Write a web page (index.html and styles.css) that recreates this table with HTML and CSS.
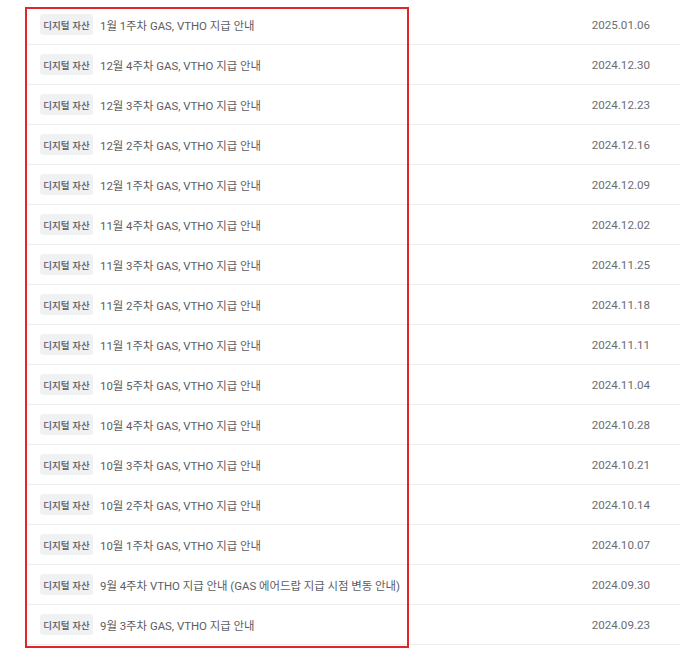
FILE: index.html
```html
<!DOCTYPE html>
<html lang="ko">
<head>
<meta charset="utf-8">
<link rel="stylesheet" href="styles.css">
</head>
<body>
<div class="page">
  <ul class="list">
    <li class="row"><span class="badge">디지털 자산</span><span class="title">1월 1주차 GAS, VTHO 지급 안내</span><span class="date">2025.01.06</span></li>
    <li class="row"><span class="badge">디지털 자산</span><span class="title">12월 4주차 GAS, VTHO 지급 안내</span><span class="date">2024.12.30</span></li>
    <li class="row"><span class="badge">디지털 자산</span><span class="title">12월 3주차 GAS, VTHO 지급 안내</span><span class="date">2024.12.23</span></li>
    <li class="row"><span class="badge">디지털 자산</span><span class="title">12월 2주차 GAS, VTHO 지급 안내</span><span class="date">2024.12.16</span></li>
    <li class="row"><span class="badge">디지털 자산</span><span class="title">12월 1주차 GAS, VTHO 지급 안내</span><span class="date">2024.12.09</span></li>
    <li class="row"><span class="badge">디지털 자산</span><span class="title">11월 4주차 GAS, VTHO 지급 안내</span><span class="date">2024.12.02</span></li>
    <li class="row"><span class="badge">디지털 자산</span><span class="title">11월 3주차 GAS, VTHO 지급 안내</span><span class="date">2024.11.25</span></li>
    <li class="row"><span class="badge">디지털 자산</span><span class="title">11월 2주차 GAS, VTHO 지급 안내</span><span class="date">2024.11.18</span></li>
    <li class="row"><span class="badge">디지털 자산</span><span class="title">11월 1주차 GAS, VTHO 지급 안내</span><span class="date">2024.11.11</span></li>
    <li class="row"><span class="badge">디지털 자산</span><span class="title">10월 5주차 GAS, VTHO 지급 안내</span><span class="date">2024.11.04</span></li>
    <li class="row"><span class="badge">디지털 자산</span><span class="title">10월 4주차 GAS, VTHO 지급 안내</span><span class="date">2024.10.28</span></li>
    <li class="row"><span class="badge">디지털 자산</span><span class="title">10월 3주차 GAS, VTHO 지급 안내</span><span class="date">2024.10.21</span></li>
    <li class="row"><span class="badge">디지털 자산</span><span class="title">10월 2주차 GAS, VTHO 지급 안내</span><span class="date">2024.10.14</span></li>
    <li class="row"><span class="badge">디지털 자산</span><span class="title">10월 1주차 GAS, VTHO 지급 안내</span><span class="date">2024.10.07</span></li>
    <li class="row"><span class="badge">디지털 자산</span><span class="title">9월 4주차 VTHO 지급 안내 (GAS 에어드랍 지급 시점 변동 안내)</span><span class="date">2024.09.30</span></li>
    <li class="row"><span class="badge">디지털 자산</span><span class="title">9월 3주차 GAS, VTHO 지급 안내</span><span class="date">2024.09.23</span></li>
  </ul>
  <div class="highlight"></div>
</div>
</body>
</html>
```

FILE: styles.css
```css
html, body {
  margin: 0;
  padding: 0;
  background: #ffffff;
}
body {
  font-family: "Roboto", "Noto Sans CJK KR", sans-serif;
}
.page {
  position: relative;
  width: 687px;
  height: 663px;
  padding-top: 5px;
  box-sizing: border-box;
}
.list {
  list-style: none;
  margin: 0 0 0 27px;
  padding: 0;
  width: 653px;
}
.row {
  display: flex;
  align-items: center;
  height: 40px;
  box-sizing: border-box;
  border-bottom: 1px solid #eeeeef;
  padding: 0 30px 0 13px;
}
.badge {
  display: inline-flex;
  align-items: center;
  justify-content: center;
  width: 53px;
  height: 21px;
  border-radius: 3px;
  background: #f0f1f3;
  color: #54575d;
  font-family: "Noto Sans CJK KR", sans-serif;
  font-size: 9.5px;
  font-weight: 500;
  flex: none;
}
.title {
  margin-left: 7px;
  flex: 1;
  color: #5a5d63;
  font-size: 11.4px;
  white-space: nowrap;
}
.date {
  color: #6a6d72;
  font-size: 11.6px;
  flex: none;
}
.highlight {
  position: absolute;
  left: 25px;
  top: 7px;
  width: 384px;
  height: 641px;
  box-sizing: border-box;
  border: 2px solid #e0262d;
}
```
